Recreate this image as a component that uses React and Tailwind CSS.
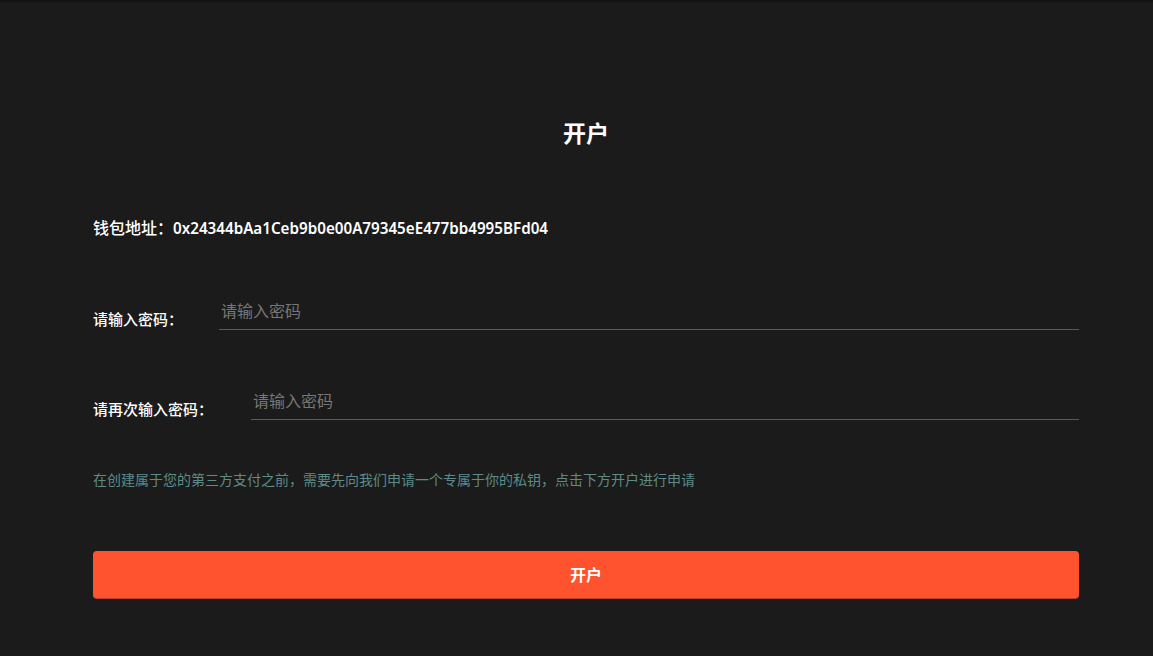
export default function App() {
  return (
    <div className="min-h-screen w-full bg-[#1b1b1b] border-t-2 border-[#121212]" style={{ fontFamily: '"Noto Sans", "Noto Sans CJK SC", sans-serif' }}>
      <div className="ml-[93px] mr-[74px] pt-[113px]">
        <h1 className="text-center text-[23px] font-bold text-white leading-[36px]">开户</h1>

        <div className="mt-[67px] flex items-center text-white leading-[20px]">
          <span className="text-[16px] font-medium">钱包地址：</span>
          <span className="text-[15.2px] font-semibold">0x24344bAa1Ceb9b0e00A79345eE477bb4995BFd04</span>
        </div>

        <div className="mt-[61px] flex items-end">
          <label className="text-[15px] font-medium text-white w-[126px] pb-[1px] leading-[20px]">请输入密码：</label>
          <input
            placeholder="请输入密码"
            className="flex-1 bg-transparent border-b border-[#5a5a5a] pb-[6px] px-[2px] text-[16px] text-white placeholder:text-[#777] outline-none"
          />
        </div>

        <div className="mt-[59px] flex items-end">
          <label className="text-[15px] font-medium text-white w-[158px] pb-[1px] leading-[20px]">请再次输入密码：</label>
          <input
            placeholder="请输入密码"
            className="flex-1 bg-transparent border-b border-[#5a5a5a] pb-[6px] px-[2px] text-[16px] text-white placeholder:text-[#777] outline-none"
          />
        </div>

        <p className="mt-[50px] text-[14px] text-[#5c8b8a] leading-[20px]">
          在创建属于您的第三方支付之前，需要先向我们申请一个专属于你的私钥，点击下方开户进行申请
        </p>

        <button className="mt-[61px] w-full h-[47px] rounded-[4px] bg-[#ff532f] shadow-[0_1px_0_#b8402a] text-white text-[16px] font-semibold">
          开户
        </button>
      </div>
    </div>
  )
}
